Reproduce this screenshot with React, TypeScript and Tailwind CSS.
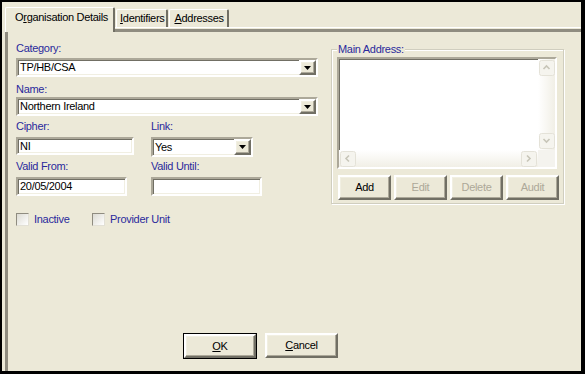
import React from 'react';

const sunken =
    'border-2 border-t-[#ACA899] border-l-[#ACA899] border-b-white border-r-white shadow-[inset_1px_1px_0_#716F64,inset_-1px_-1px_0_#F1EFE2]';
const raised =
    'border-2 border-t-white border-l-white border-b-[#716F64] border-r-[#716F64] shadow-[inset_-1px_-1px_0_#ACA899,inset_1px_1px_0_#F1EFE2]';
const label = 'leading-[13px] text-[#2a2a9c]';

const DownArrow = () => (
    <svg width="7" height="4" viewBox="0 0 7 4">
        <polygon points="0,0 7,0 3.5,4" fill="#000" />
    </svg>
);

const Select = ({ value, className }: { value: string; className: string }) => (
    <div className={`${sunken} bg-white flex items-stretch ${className}`}>
        <span className="flex-1 pl-[2px] leading-[13px] self-center text-black">{value}</span>
        <span className={`${raised} w-[17px] bg-[#ECE9D8] flex items-center justify-center`}>
            <DownArrow />
        </span>
    </div>
);

const Input = ({ value, className }: { value: string; className: string }) => (
    <div className={`${sunken} bg-white flex items-center pl-[2px] text-black ${className}`}>
        {value}
    </div>
);

const Checkbox = ({ text, className }: { text: string; className?: string }) => (
    <div className={`flex items-center ${className ?? ''}`}>
        <span className="w-[13px] h-[13px] border border-t-[#8F8C80] border-l-[#8F8C80] border-b-[#E2E0D6] border-r-[#E2E0D6] bg-gradient-to-br from-[#DCDBD3] to-white" />
        <span className={`ml-[5px] ${label}`}>{text}</span>
    </div>
);

const ScrollArrow = ({ dir }: { dir: 'up' | 'down' | 'left' | 'right' }) => {
    const pts = {
        up: '4.5,9 7.5,6 10.5,9',
        down: '4.5,6 7.5,9 10.5,6',
        left: '9,4.5 6,7.5 9,10.5',
        right: '6,4.5 9,7.5 6,10.5',
    }[dir];
    return (
        <svg width="16" height="16" viewBox="0 0 16 16" className="shrink-0">
            <rect x="0.5" y="0.5" width="15" height="15" rx="2" fill="#F5F4EE" stroke="#E4E2D8" />
            <polyline points={pts} fill="none" stroke="#C7C5B8" strokeWidth="1.6" />
        </svg>
    );
};

const Button = ({ text, disabled, className }: { text: string; disabled?: boolean; className?: string }) => (
    <div
        className={`${raised} bg-[#ECE9D8] flex items-center justify-center ${
            disabled ? 'text-[#ACA899]' : 'text-black'
        } ${className ?? ''}`}
    >
        {text}
    </div>
);

export default function App() {
    return (
        <div className="w-[585px] h-[374px] bg-black pt-[2px] pl-[2px] pr-[4px] pb-[3px] font-['Liberation_Sans',Arial,sans-serif] text-[11px] tracking-[-0.3px]">
            <div className="h-full bg-[#ECE9D8] flex flex-col">
                {/* tab strip */}
                <div className="flex items-end h-[25px] pl-[3px] text-black">
                    <div className="relative z-10 -mb-[5px] h-[25px] pl-[9px] pr-[5px] pt-[3px] border-l border-t border-white border-r-2 border-r-[#716F64] rounded-t-[2px] bg-[#ECE9D8] leading-[13px]">
                        O<u>r</u>ganisation Details
                    </div>
                    <div className="h-[18px] pl-[3px] pr-[2px] pt-[2px] border-l border-t border-white border-r-2 border-r-[#716F64] rounded-t-[2px] leading-[13px] ml-[1px]">
                        <u>I</u>dentifiers
                    </div>
                    <div className="h-[18px] pl-[4px] pr-[3px] pt-[2px] border-l border-t border-white border-r-2 border-r-[#716F64] rounded-t-[2px] leading-[13px] ml-[1px]">
                        <u>A</u>ddresses
                    </div>
                </div>

                {/* panel */}
                <div className="flex-1 ml-[3px] border-t border-white flex flex-col">
                    <div className="flex-1 mt-[1px] border-t-[3px] border-l-[3px] border-t-[#8F8C80] border-l-[#8F8C80] flex flex-col">
                        <div className="flex items-start">
                            {/* left column */}
                            <div className="ml-[8px] mt-[10px] w-[302px] flex flex-col">
                                <div className={label}>Category:</div>
                                <Select value="TP/HB/CSA" className="mt-[3px] h-[19px]" />
                                <div className={`mt-[6px] ${label}`}>Name:</div>
                                <Select value="Northern Ireland" className="mt-[1px] h-[19px]" />

                                <div className="mt-[4px] flex">
                                    <div className="w-[135px] flex flex-col">
                                        <div className={label}>Cipher:</div>
                                        <Input value="NI" className="mt-[4px] h-[18px] w-[118px]" />
                                    </div>
                                    <div className="flex flex-col">
                                        <div className={label}>Link:</div>
                                        <Select value="Yes" className="mt-[4px] h-[20px] w-[102px]" />
                                    </div>
                                </div>

                                <div className="mt-[3px] flex">
                                    <div className="w-[135px] flex flex-col">
                                        <div className={label}>Valid From:</div>
                                        <Input value="20/05/2004" className="mt-[4px] h-[19px] w-[111px]" />
                                    </div>
                                    <div className="flex flex-col">
                                        <div className={label}>Valid Until:</div>
                                        <Input value="" className="mt-[4px] h-[19px] w-[111px]" />
                                    </div>
                                </div>

                                <div className="mt-[17px] flex">
                                    <Checkbox text="Inactive" className="w-[76px]" />
                                    <Checkbox text="Provider Unit" />
                                </div>
                            </div>

                            {/* Main Address group */}
                            <div className="relative ml-[13px] mt-[17px] w-[233px] h-[155px] border border-[#D0CEBF] shadow-[inset_1px_1px_0_#fff,1px_1px_0_#fff] flex flex-col">
                                <span className={`absolute left-[5px] -top-[7px] px-[1px] bg-[#ECE9D8] ${label}`}>
                                    Main Address:
                                </span>
                                <div className={`${sunken} bg-white ml-[5px] mt-[7px] w-[220px] h-[112px] flex flex-col`}>
                                    <div className="flex-1 flex">
                                        <div className="flex-1" />
                                        <div className="w-[17px] flex flex-col items-center bg-gradient-to-r from-white to-[#F1EFE6] pt-[1px] pb-[1px]">
                                            <ScrollArrow dir="up" />
                                            <div className="flex-1" />
                                            <ScrollArrow dir="down" />
                                        </div>
                                    </div>
                                    <div className="h-[17px] flex">
                                        <div className="flex-1 flex items-center bg-gradient-to-b from-white to-[#F1EFE6] px-[1px]">
                                            <ScrollArrow dir="left" />
                                            <div className="flex-1" />
                                            <ScrollArrow dir="right" />
                                        </div>
                                        <div className="w-[17px] bg-[#F4F3EE]" />
                                    </div>
                                </div>
                                <div className="ml-[6px] mt-[6px] flex gap-[3px]">
                                    <Button text="Add" className="w-[53px] h-[25px]" />
                                    <Button text="Edit" disabled className="w-[53px] h-[25px]" />
                                    <Button text="Delete" disabled className="w-[53px] h-[25px]" />
                                    <Button text="Audit" disabled className="w-[53px] h-[25px]" />
                                </div>
                            </div>
                        </div>

                        {/* dialog buttons */}
                        <div className="mt-auto mb-[12px] pl-[175px] flex gap-[8px] text-black">
                            <div className="border border-black">
                                <div className={`${raised} bg-[#ECE9D8] w-[72px] h-[24px] flex items-center justify-center`}>
                                    <span><u>O</u>K</span>
                                </div>
                            </div>
                            <div className={`${raised} bg-[#ECE9D8] w-[73px] h-[25px] flex items-center justify-center`}>
                                <span><u>C</u>ancel</span>
                            </div>
                        </div>
                    </div>
                </div>
            </div>
        </div>
    );
}
